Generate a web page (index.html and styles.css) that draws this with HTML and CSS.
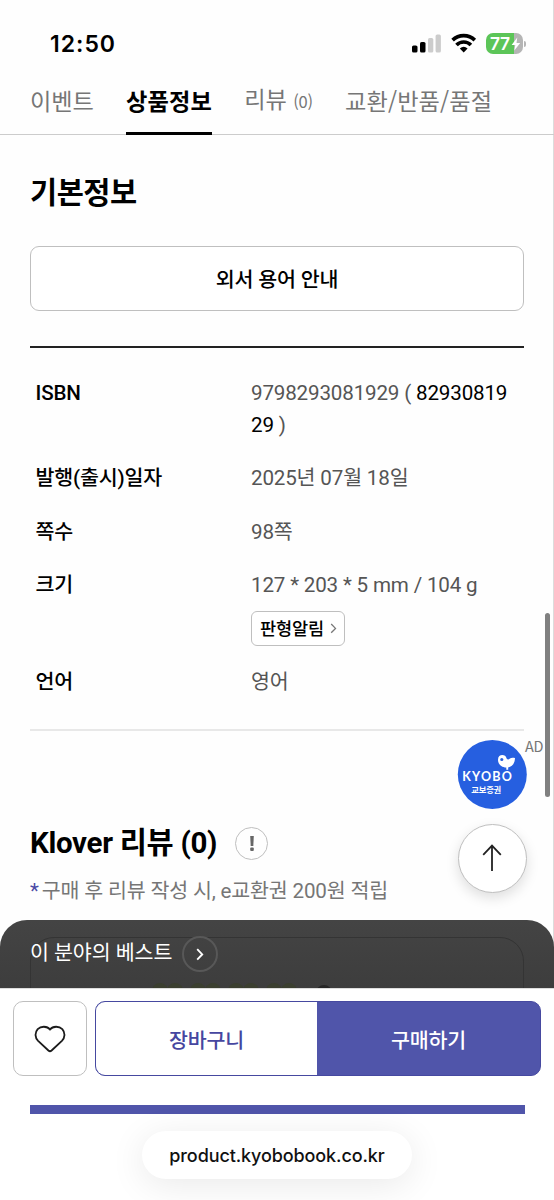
FILE: index.html
```html
<!DOCTYPE html>
<html lang="ko">
<head>
<meta charset="utf-8">
<title>상품정보</title>
<link rel="stylesheet" href="styles.css">
</head>
<body>
<div class="screen">
  <header class="status">
    <span class="clock">12:50</span>
    <div class="indicators">
      <svg class="signal" width="30" height="20" viewBox="0 0 30 20">
        <rect x="0" y="12.5" width="5.5" height="7" rx="1.6" fill="#000"/>
        <rect x="8" y="9" width="5.5" height="10.5" rx="1.6" fill="#000"/>
        <rect x="16" y="5" width="5.3" height="14.5" rx="1.6" fill="#ccc"/>
        <rect x="23.6" y="1.5" width="5.3" height="18" rx="1.6" fill="#ccc"/>
      </svg>
      <svg class="wifi" width="26" height="20" viewBox="0 0 26 20">
        <g fill="none" stroke="#000" stroke-width="3.7">
          <path d="M1.6 7.2a16 16 0 0 1 22.2 0"/>
          <path d="M5.5 12a10.2 10.2 0 0 1 14.4 0"/>
        </g>
        <path d="M8.8 15.5a6 6 0 0 1 7.8 0L12.7 19.4z" fill="#000"/>
      </svg>
      <div class="battery">
        <span class="level">77</span>
        <svg width="10" height="14" viewBox="0 0 10 14"><path d="M6.3 .5L.6 8h3.7L3.3 13.5 9.2 6H5.5z" fill="#fff"/></svg>
      </div>
      <span class="battery-tip"></span>
    </div>
  </header>

  <nav class="tabs">
    <a class="tab tab-event">이벤트</a>
    <a class="tab tab-info active">상품정보</a>
    <a class="tab tab-review">리뷰 <small>(0)</small></a>
    <a class="tab tab-return">교환/반품/품절</a>
  </nav>

  <main class="content">
    <h2 class="title">기본정보</h2>
    <button class="guide">외서 용어 안내</button>
    <dl class="specs">
      <dt>ISBN</dt><dd>9798293081929 ( <b>82930819<br>29</b> )</dd>
      <dt>발행(출시)일자</dt><dd>2025년 07월 18일</dd>
      <dt>쪽수</dt><dd>98쪽</dd>
      <dt>크기</dt>
      <dd>127 * 203 * 5 mm / 104 g
        <button class="format">판형알림
          <svg width="7" height="11" viewBox="0 0 7 11"><path d="M1.2 1l4.3 4.4-4.3 4.4" fill="none" stroke="#777" stroke-width="1.3"/></svg>
        </button>
      </dd>
      <dt>언어</dt><dd>영어</dd>
    </dl>
    <div class="review-head">
      <h2 class="title">Klover 리뷰 (0)</h2>
      <span class="notice"><svg width="8" height="17" viewBox="0 0 8 17"><path d="M2.2 1h3.6l-.5 10H2.7z" fill="#666"/><rect x="2.2" y="12.5" width="3.6" height="3.5" rx="1" fill="#666"/></svg></span>
    </div>
    <p class="benefit"><i>*</i>구매 후 리뷰 작성 시, e교환권 200원 적립</p>
  </main>

  <section class="best">
    <div class="ghost">
      <svg width="200" height="8" viewBox="0 0 200 8">
        <g fill="#3b3f30"><circle cx="9" cy="11" r="8"/><circle cx="24" cy="11" r="8"/><circle cx="47" cy="11" r="8"/><circle cx="62" cy="11" r="8"/><circle cx="85" cy="11" r="8"/><circle cx="100" cy="11" r="8"/><circle cx="123" cy="11" r="8"/><circle cx="138" cy="11" r="8"/></g>
        <circle cx="173" cy="13" r="8" fill="#262626"/>
      </svg>
    </div>
    <span class="best-title">이 분야의 베스트</span>
    <span class="best-more"><svg width="8" height="13" viewBox="0 0 8 13"><path d="M1.2 1.2l5 5.2-5 5.2" fill="none" stroke="#fff" stroke-width="1.9"/></svg></span>
  </section>

  <footer class="bottom">
    <div class="buy-row">
      <button class="like"><svg width="32" height="28" viewBox="0 0 32 28"><path d="M16 4.5C13.1.9 7 .9 3.7 4.1.6 7.7.9 12.6 4.1 15.8L14.4 25.5Q16 26.9 17.6 25.5L27.9 15.8C31.1 12.6 31.4 7.7 28.3 4.1 25 .9 18.9.9 16 4.5Z" fill="none" stroke="#1b1b1b" stroke-width="1.8"/></svg></button>
      <div class="buy">
        <button class="cart">장바구니</button>
        <button class="order">구매하기</button>
      </div>
    </div>
    <div class="strip"></div>
    <div class="address">product.kyobobook.co.kr</div>
  </footer>

  <div class="ad">
    <svg width="70" height="70" viewBox="0 0 70 70">
      <circle cx="35.3" cy="35.4" r="34.5" fill="#265fe0"/>
      <path fill-rule="evenodd" d="M41 20.8C41 14.6 48.8 15 49.6 19.4c.8 1.4 2 1.4 3 .4 1.4-1.2 3.2-1.2 5.4-.8-.2 5.8-3.2 8.8-6.8 9.4v2.4h-1.9v-2.3c-4.4-.1-8.3-2.9-8.3-7.7zM43.2 20.5a1.6 1.6 0 1 0 3.2 0 1.6 1.6 0 1 0-3.2 0z" fill="#fff"/>
      <text class="logo-en" x="5.2" y="42">KYOBO</text>
      <text class="logo-ko" x="14.3" y="53.6">교보증권</text>
    </svg>
  </div>
  <span class="ad-label">AD</span>
  <button class="top"><svg width="20" height="28" viewBox="0 0 20 28"><path d="M10 27V1.6M1.2 10.8L10 1.6l8.8 9.2" fill="none" stroke="#222" stroke-width="1.8"/></svg></button>
  <div class="scrollbar"></div>
</div>
</body>
</html>
```
FILE: styles.css
```css
* { box-sizing: border-box; }
body { margin: 0; background: #fff; }
button { font: inherit; letter-spacing: inherit; color: inherit; padding: 0; background: #fff; }
svg { display: block; flex: none; }
.screen {
  position: relative;
  width: 554px;
  height: 1200px;
  overflow: hidden;
  display: flex;
  flex-direction: column;
  box-shadow: inset -1px 0 #dcdcdc;
  background: #fefefe;
  font-family: Roboto, "Noto Sans CJK KR", sans-serif;
  font-size: 20.6px;
  letter-spacing: -0.01em;
  color: #000;
}

.status { height: 80px; padding: 33px 28px 0 50px; display: flex; justify-content: space-between; }
.clock { font: 600 23px/22px Inter, sans-serif; letter-spacing: 1px; }
.indicators { display: flex; align-items: flex-start; }
.wifi { margin-left: 9px; }
.battery {
  width: 37px; height: 21px; margin-left: 9px; padding-left: 4px;
  display: flex; align-items: center; gap: 1px;
  border-radius: 7px;
  background: linear-gradient(90deg, #5cc558 77%, #b5b5b5 77%);
}
.level { font: 600 17.5px/21px Inter, sans-serif; letter-spacing: -0.4px; color: #fff; }
.battery-tip { width: 2px; height: 6px; margin: 8px 0 0 1px; border-radius: 0 2px 2px 0; background: #b5b5b5; }

.tabs { height: 55px; padding-left: 30px; display: flex; gap: 32.2px; border-bottom: 1px solid #ccc; color: #767676; }
.tab { font: 400 23.2px/40px "Noto Sans CJK KR", sans-serif; height: 55px; white-space: nowrap; letter-spacing: -0.05px; }
.tab-review { margin-top: -2px; }
.tab small { font-size: 16.5px; letter-spacing: -0.2px; }
.active { font-weight: 700; letter-spacing: 0.15px; color: #000; border-bottom: 3px solid #000; }
.tab-return { letter-spacing: 0.1px; }

.content { height: 785px; padding: 0 30px; }
.title { margin: 0; font-size: 29.5px; line-height: 40px; font-weight: 700; letter-spacing: -0.3px; white-space: nowrap; }
.content > .title { padding-top: 38px; letter-spacing: -0.5px; }
.guide { display: block; width: 494px; height: 65px; margin: 33px 0 0; padding-bottom: 2px; border: 1px solid #bfbfbf; border-radius: 9px; font-weight: 500; }
.specs {
  height: 385px; margin: 35px 0 0; padding: 29px 5.5px 0;
  display: grid; grid-template-columns: 215.5px 1fr; align-content: start; row-gap: 21px;
  border-top: 2px solid #222; border-bottom: 2px solid #e8e8e8;
  line-height: 32.2px;
}
.specs dt { font-weight: 500; letter-spacing: -0.2px; }
.specs dd { margin: 0; color: #555; white-space: nowrap; letter-spacing: -0.17px; }
.specs b { font-weight: 400; color: #000; }
.format {
  width: 94px; height: 35px; margin: 10px 0 -1px; padding-left: 1px; display: flex; align-items: center; justify-content: center; gap: 6px;
  border: 1px solid #bfbfbf; border-radius: 6px; color: #000; font-size: 17.6px; line-height: 30px; font-weight: 500;
}
.review-head { margin-top: 92px; display: flex; align-items: center; gap: 18px; }
.notice { width: 33px; height: 33px; display: flex; align-items: center; justify-content: center; border: 1.5px solid #bfbfbf; border-radius: 50%; }
.benefit { margin: 12px 0 0; line-height: 32px; color: #767676; white-space: nowrap; letter-spacing: -0.17px; }
.benefit i { font-style: normal; color: #4a4aa5; margin-right: 3px; }

.best {
  height: 68px; position: relative; padding: 16px 30px 0; display: flex; gap: 10px; overflow: hidden;
  background: linear-gradient(#444, #3d3d3d); border-radius: 27px 27px 0 0; color: #fff;
}
.best-title { position: relative; line-height: 34px; letter-spacing: -0.05px; }
.best-more { position: relative; width: 36px; height: 36px; display: flex; align-items: center; justify-content: center; border: 2px solid #585858; border-radius: 50%; }
.ghost { position: absolute; left: 30px; top: 17px; width: 494px; height: 80px; border: 1px solid #343434; border-radius: 24px; padding: 42px 0 0 120px; }

.bottom { height: 212px; border-top: 1px solid #ddd; background: #fff; }
.buy-row { padding: 12px 13px 0; display: flex; gap: 8px; }
.like { width: 74px; height: 75px; display: flex; align-items: center; justify-content: center; border: 1px solid #bfbfbf; border-radius: 10px; }
.buy { width: 446px; height: 75px; display: flex; overflow: hidden; border: 1px solid #4649a0; border-radius: 10px; font-weight: 500; background: #5055aa; }
.cart { width: 221px; border: 0; color: #4646a0; }
.order { flex: 1; border: 0; background: #5055aa; color: #fff; }
.strip { width: 495px; height: 9px; margin: 29px 0 0 29.5px; background: #5055aa; }
.address {
  width: 270px; height: 48px; margin: 17px 0 0 142px; border-radius: 24px; background: #fff; box-shadow: 0 6px 36px rgba(0,0,0,.09);
  text-align: center; font: 500 18px/49px Inter, sans-serif; letter-spacing: -0.1px; color: #111;
}

.ad { position: absolute; left: 457px; top: 739px; }
.logo-en { font: 700 12.5px Lato, sans-serif; fill: #fff; letter-spacing: 1.3px; }
.logo-ko { font: 700 8.3px "Noto Sans CJK KR", sans-serif; fill: #fff; }
.ad-label { position: absolute; left: 525px; top: 737px; font-size: 14.5px; line-height: 18px; font-family: "Noto Sans CJK KR", sans-serif; color: #767676; }
.top {
  position: absolute; left: 458px; top: 824px; width: 69px; height: 69px;
  display: flex; align-items: center; justify-content: center;
  border: 1px solid #bfbfbf; border-radius: 50%; box-shadow: 0 5px 13px rgba(0,0,0,.13);
}
.top svg { margin: -2px 1px 0 0; }
.scrollbar { position: absolute; left: 545px; top: 613px; width: 4.5px; height: 184px; border-radius: 3px; background: #808080; }
```
